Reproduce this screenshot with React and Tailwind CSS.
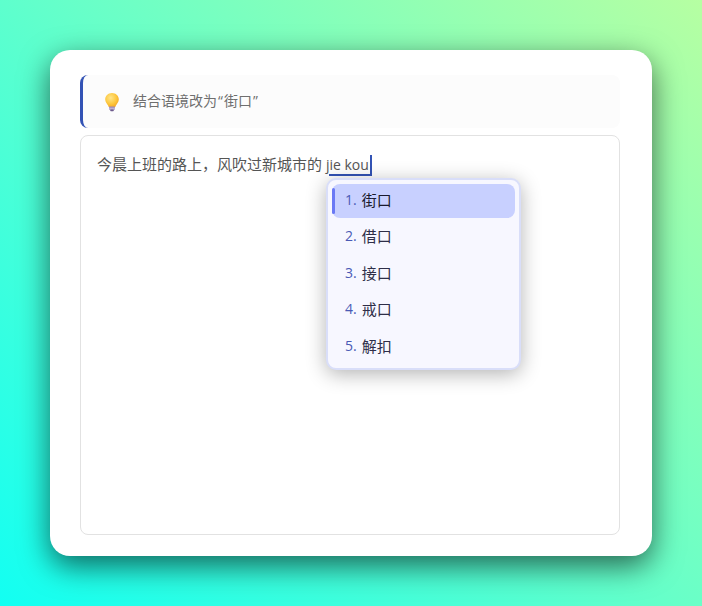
const fontStack = { fontFamily: '"Open Sans", "Noto Sans CJK SC", sans-serif' };

const candidates = ["街口", "借口", "接口", "戒口", "解扣"];

function Bulb() {
  return (
    <svg width="16" height="20" viewBox="0 0 16 20">
      <defs>
        <radialGradient id="glass" cx="0.4" cy="0.35" r="0.7">
          <stop offset="0" stopColor="#ffe58a" />
          <stop offset="0.6" stopColor="#fdc83f" />
          <stop offset="1" stopColor="#f5a623" />
        </radialGradient>
      </defs>
      <path d="M8 1C4.1 1 1.2 3.9 1.2 7.4c0 2.7 1.9 4.1 2.9 6 .3.6.5 1 .5 1.6h6.8c0-.6.2-1 .5-1.6 1-1.9 2.9-3.3 2.9-6C14.8 3.9 11.9 1 8 1z" fill="url(#glass)" />
      <rect x="5" y="14.6" width="6" height="3.2" rx="0.8" fill="#9a86b8" />
      <rect x="5" y="15.8" width="6" height="0.8" fill="#d8d0e4" />
      <rect x="6.2" y="17.6" width="3.6" height="1.6" rx="0.8" fill="#6d5a8c" />
    </svg>
  );
}

export default function App() {
  return (
    <main
      style={fontStack}
      className="flex h-[606px] w-[702px] items-start justify-center overflow-hidden bg-[linear-gradient(45deg,#12fff2,#b6ffa2)] pt-[50px]"
    >
      <section className="flex h-[506px] w-[602px] flex-col rounded-[20px] bg-white px-[30px] pt-[25px] shadow-[0_10px_30px_rgba(0,0,0,0.6)]">
        <div className="flex h-[53px] w-[540px] items-center rounded-lg border-l-[3px] border-[#3353b5] bg-[#fcfcfc] pl-[21px] text-sm text-[#6f6f6f]">
          <Bulb />
          <span className="mb-[2px] ml-[13px]">
            结合语境改为<span className="px-[1px]">“</span>街口<span className="px-[1px]">”</span>
          </span>
        </div>
        <div className="relative mt-[7px] h-[400px] w-[540px] rounded-lg border border-[#e2e2e2] bg-white px-4 py-[18px] text-[15px] leading-[20px] text-[#555]">
          <p>
            今晨上班的路上，风吹过新城市的{" "}
            <span className="relative inline-block border-r-2 border-[#3353b5] pr-[1px] pb-[2px] text-[14px] leading-[19px]">
              jie kou
              <span className="absolute right-0 bottom-0 left-[3px] h-[2px] bg-[#3353b5]" />
            </span>
          </p>
          <ul className="absolute top-[42px] left-[245px] flex h-[192px] w-[195px] flex-col rounded-[10px] border-2 border-[#d9def9] bg-[#f7f7ff] pt-[4px] pr-[4px] pb-[3px] pl-[4px] shadow-[0_4px_20px_rgba(0,0,0,0.3)]">
            {candidates.map((word, i) => (
              <li
                key={word}
                className={
                  i === 0
                    ? "relative flex h-[34px] items-center rounded-lg bg-[#c8d0ff] pb-[2px] pl-[13px] text-[#1a1a2e]"
                    : "mt-[2.4px] flex h-[34px] items-center pb-[2px] pl-[13px] text-[#2e2e48]"
                }
              >
                {i === 0 && <span className="absolute top-[4px] bottom-[4px] left-0 w-[3px] rounded-sm bg-[#6a78f5]" />}
                <span className="mr-[5px] text-sm text-[#4a5ab5]">{i + 1}.</span>
                {word}
              </li>
            ))}
          </ul>
        </div>
      </section>
    </main>
  );
}
